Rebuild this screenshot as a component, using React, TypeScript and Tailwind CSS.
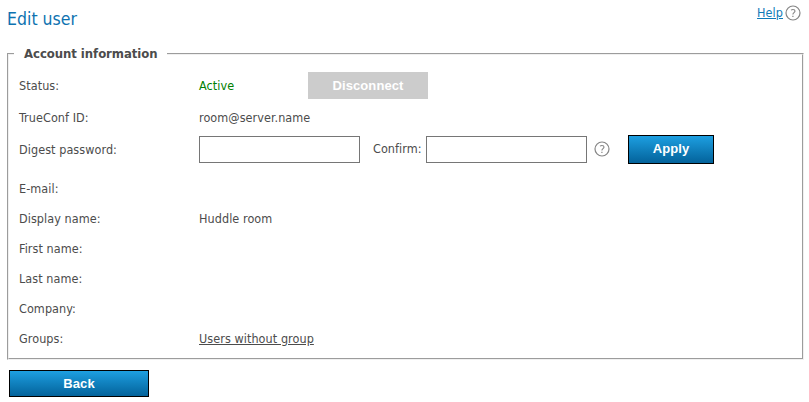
import type { ReactNode } from "react";

function HelpIcon() {
  return (
    <svg width="16" height="16" viewBox="0 0 16 16" className="block shrink-0" fill="none">
      <circle cx="8" cy="8" r="7" stroke="#858585" strokeWidth="1.2" />
      <path d="M6 5.1C6.6 4.7 7.2 4.5 7.9 4.5c1.3 0 2.1.6 2.1 1.6 0 1.5-2.1 1.5-2.1 3.3" stroke="#858585" strokeWidth="1.1" />
      <path d="M7.3 10.7h1.2v1.2H7.3z" fill="#858585" />
    </svg>
  );
}

function Row({ label, className, children }: { label: string; className: string; children?: ReactNode }) {
  return (
    <div className={`flex items-center ${className}`}>
      <div className="w-[180px] shrink-0 whitespace-nowrap">{label}</div>
      {children}
    </div>
  );
}

const blue =
  "border border-black bg-linear-to-b from-[#1d9fe1] to-[#04639b] text-white font-bold text-[13px] font-['Liberation_Sans',Arial,sans-serif] flex items-center justify-center";

export default function App() {
  return (
    <main className="h-[402px] w-[809px] overflow-hidden bg-white font-['DejaVu_Sans_Condensed','DejaVu_Sans',sans-serif] text-[12.5px] leading-[16px] tracking-[0.07px] text-[#4c4c4c]">
      <header className="flex h-[46px] items-start justify-between pl-[7px] pr-[8px]">
        <h1 className="mt-[8px] text-[17.5px] leading-[22px] tracking-[0.02px] text-[#0e72b0]">Edit user</h1>
        <div className="mt-[5px] flex items-center gap-[2px]">
          <a className="text-[#0f7ab8] underline">Help</a>
          <HelpIcon />
        </div>
      </header>
      <fieldset className="ml-[7px] h-[314px] w-[797px] border-2 border-[#f0f0f0] pl-[10px] [border-style:groove]">
        <legend className="-ml-[5px] h-[16px] w-[153px] whitespace-nowrap px-[10px] text-[13px] font-bold leading-[16px] tracking-[-0.05px]">Account information</legend>
        <Row label="Status:" className="mt-[9px] h-[30px]">
          <span className="w-[109px] text-[#008000]">Active</span>
          <button className="mb-px h-[27px] w-[120px] bg-[#ccc] font-['Liberation_Sans',Arial,sans-serif] text-[13px] font-bold tracking-[0.1px] text-white">Disconnect</button>
        </Row>
        <Row label="TrueConf ID:" className="h-[33px]">room@server.name</Row>
        <Row label="Digest password:" className="h-[32px]">
          <div className="mb-[2px] flex items-center">
            <input className="h-[27px] w-[161px] border border-[#767676] bg-white" />
            <span className="ml-[13px] w-[53px] whitespace-nowrap">Confirm:</span>
            <input className="h-[27px] w-[161px] border border-[#767676] bg-white" />
            <span className="mb-px ml-[7px]"><HelpIcon /></span>
            <button className={`ml-[18px] h-[29px] w-[86px] ${blue} tracking-[0.1px]`}>Apply</button>
          </div>
        </Row>
        <Row label="E-mail:" className="mt-[8px] h-[30px]" />
        <Row label="Display name:" className="h-[30px]">Huddle room</Row>
        <Row label="First name:" className="h-[30px]" />
        <Row label="Last name:" className="h-[30px]" />
        <Row label="Company:" className="h-[30px]" />
        <Row label="Groups:" className="h-[30px]"><a className="underline">Users without group</a></Row>
      </fieldset>
      <button className={`ml-[9px] mt-[10px] h-[27px] w-[140px] ${blue} tracking-[0.1px]`}>Back</button>
    </main>
  );
}
